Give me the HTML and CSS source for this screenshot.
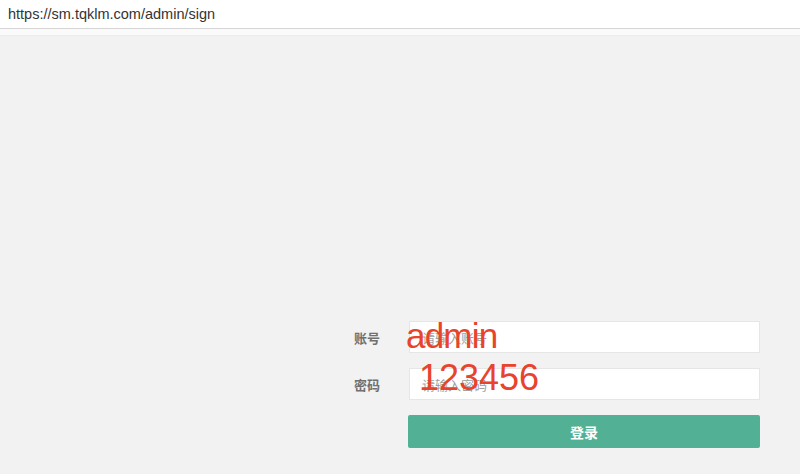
FILE: index.html
```html
<!DOCTYPE html>
<html>
<head>
<meta charset="utf-8">
<link rel="stylesheet" href="styles.css">
</head>
<body>
<div class="urlbar">https://sm.tqklm.com/admin/sign</div>
<div class="sep"></div>
<main class="page">
  <form class="form">
    <div class="row">
      <label class="label">账号</label>
      <div class="field">
        <input class="input" placeholder="请输入账号">
        <span class="note note-user">admin</span>
      </div>
    </div>
    <div class="row">
      <label class="label">密码</label>
      <div class="field">
        <input class="input" placeholder="请输入密码">
        <span class="note note-pass">123456</span>
      </div>
    </div>
    <div class="row">
      <span class="label"></span>
      <button type="button" class="btn">登录</button>
    </div>
  </form>
</main>
</body>
</html>
```
FILE: styles.css
```css
html, body {
  margin: 0;
  padding: 0;
  height: 100%;
}
body {
  font-family: "Liberation Sans", "Noto Sans CJK SC", sans-serif;
  background: #f2f2f2;
  overflow: hidden;
}
.urlbar {
  height: 29px;
  background: #fff;
  border-bottom: 1px solid #d6d6d6;
  box-sizing: border-box;
  padding-left: 8px;
  font-size: 14.5px;
  line-height: 29px;
  color: #333;
}
.sep {
  height: 6px;
  background: #fafafa;
  border-bottom: 1px solid #ececec;
}
.page {
  display: flex;
  justify-content: flex-end;
  padding: 285px 40px 0 0;
}
.form {
  display: flex;
  flex-direction: column;
  gap: 15px;
}
.row {
  display: flex;
  align-items: center;
}
.label {
  width: 69px;
  padding-right: 29px;
  text-align: right;
  font-size: 13px;
  font-weight: bold;
  color: #707070;
  box-sizing: border-box;
  font-family: "Noto Sans CJK SC", sans-serif;
}
.field {
  position: relative;
}
.input {
  display: block;
  width: 351px;
  height: 32px;
  box-sizing: border-box;
  border: 1px solid #e6e6e6;
  background: #fff;
  padding: 0 12px;
  font-size: 13px;
  font-family: "Noto Sans CJK SC", sans-serif;
  outline: none;
}
.input::placeholder {
  color: #a0a0a0;
}
.note {
  position: absolute;
  color: #e8432d;
  font-family: "Liberation Sans", sans-serif;
  line-height: 1;
  pointer-events: none;
}
.note-user {
  font-size: 35px;
  letter-spacing: -0.8px;
  left: -3px;
  top: -3px;
}
.note-pass {
  font-size: 36px;
  left: 10px;
  top: -8px;
}
.btn {
  width: 352px;
  height: 33px;
  margin-left: -1px;
  border: none;
  border-radius: 2px;
  background: #52b094;
  color: #fff;
  font-size: 14px;
  font-weight: bold;
  font-family: "Noto Sans CJK SC", sans-serif;
}
```
